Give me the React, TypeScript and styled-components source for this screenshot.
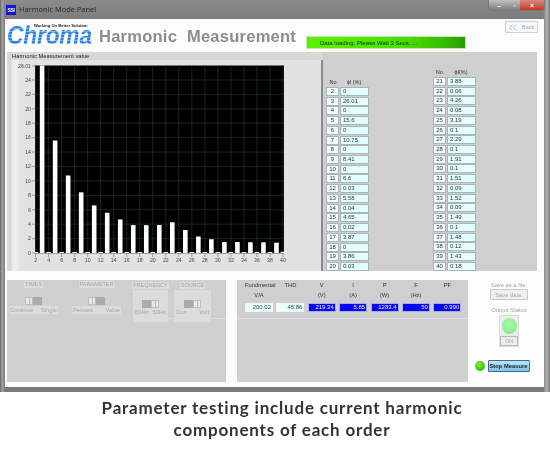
import React from "react";
import styled, { createGlobalStyle } from "styled-components";

const Global = createGlobalStyle`
  html, body { margin: 0; padding: 0; background: #fff; }
  * { box-sizing: border-box; }
  body { font-family: "Liberation Sans", Arial, sans-serif; }
`;

const Page = styled.div`
  width: 550px;
  height: 449px;
  overflow: hidden;
  display: flex;
  flex-direction: column;
  background: #fff;
`;

const Frame = styled.div`
  height: 392px;
  flex: none;
  display: flex;
  flex-direction: column;
  padding: 0 6px 5px 5px;
  background:
    linear-gradient(90deg, #5f5f5f 0, #a5a5a5 2px, #7b7b7b 5px, transparent 5px, transparent 544px, #8a8a8a 544px, #b0b0b0 547px, #777 550px),
    linear-gradient(180deg, #8b8b8b 0, #7c7c7c 19px, #7a7a7a 100%);
  filter: blur(0.3px);
`;

const TitleBar = styled.div`
  height: 19px;
  flex: none;
  display: flex;
  align-items: flex-start;
  color: #2a2a2a;
  margin-right: -1px;
`;

const AppIcon = styled.span`
  width: 10px;
  height: 10px;
  margin: 5px 3px 0 1px;
  background: #1414d8;
  color: #fff;
  font-size: 5px;
  font-weight: bold;
  line-height: 10px;
  text-align: center;
  letter-spacing: -0.3px;
`;

const WindowTitle = styled.span`
  font: 7.4px/19px "Noto Sans", sans-serif;
  flex: 1;
`;

const Controls = styled.div`
  display: flex;
  height: 11px;
  border: 1px solid #777;
  border-top: 0;
  border-radius: 0 0 3px 3px;
  overflow: hidden;
`;

const ControlButton = styled.span<{ $w: number; $close?: boolean }>`
  width: ${(p) => p.$w}px;
  display: flex;
  align-items: center;
  justify-content: center;
  color: #fff;
  font-size: 7px;
  font-weight: bold;
  background: ${(p) => (p.$close ? "linear-gradient(180deg,#d88a80,#c03828)" : "linear-gradient(180deg,#c0c0c0,#7d7d7d)")};
`;

const Client = styled.div`
  flex: 1;
  min-height: 0;
  background: #fcfcfc;
  display: flex;
  flex-direction: column;
  padding-left: 2px;
`;

const Header = styled.div`
  height: 33px;
  flex: none;
  display: flex;
`;

const Logo = styled.div`
  position: relative;
  width: 83px;
  height: 33px;
  margin-right: 9px;
`;

const LogoMark = styled.span`
  display: inline-block;
  margin-top: 4px;
  font: italic bold 25px/24px "Liberation Sans", sans-serif;
  letter-spacing: -0.2px;
  transform: scaleX(0.91);
  transform-origin: 0 0;
  background: repeating-linear-gradient(180deg, #2f7fe6 0, #2f7fe6 2px, #6fb4f2 2px, #6fb4f2 3px);
  -webkit-background-clip: text;
  background-clip: text;
  color: transparent;
`;

const Tagline = styled.span`
  position: absolute;
  left: 27px;
  top: 4px;
  font: bold 4.1px/6px "Liberation Sans", sans-serif;
  color: #222;
  white-space: nowrap;
`;

const Title = styled.h1`
  margin: 0;
  width: 207px;
  flex: none;
  font: bold 16.5px/34px "Liberation Sans", sans-serif;
  color: #8d8d8d;
  letter-spacing: 0.25px;
  word-spacing: 5px;
  white-space: nowrap;
`;

const StatusBar = styled.div`
  width: 160px;
  height: 13px;
  margin-top: 17px;
  flex: none;
  padding-left: 13px;
  font-size: 6px;
  line-height: 12px;
  color: #143000;
  border: 1px solid #c4e8b0;
  background: linear-gradient(90deg, #5cf000 0, #48e000 60%, #38c000 85%, #2a9a00 100%);
`;

const BackButton = styled.button`
  width: 33px;
  height: 12px;
  margin: 2px 0 0 39px;
  padding: 0 0 0 3px;
  flex: none;
  display: flex;
  align-items: center;
  gap: 5px;
  background: #f8f8f8;
  border: 1px solid #c4d0da;
  border-radius: 1px;
  font: 5.5px "Liberation Sans", sans-serif;
  color: #a8a8a8;
`;

const Upper = styled.div`
  width: 530px;
  height: 219px;
  flex: none;
  display: flex;
  background: #cfcfcf;
`;

const ChartSection = styled.section`
  width: 316px;
  flex: none;
  padding-left: 4px;
  display: flex;
  flex-direction: column;
  background: #d8d8d8;
`;

const ChartLabel = styled.div`
  height: 8px;
  flex: none;
  font-size: 5.8px;
  line-height: 7px;
  color: #222;
  padding-left: 1px;
  padding-top: 1px;
`;

const ChartCard = styled.div`
  flex: 1;
  border-right: 2px solid #8a8a8a;
  background: linear-gradient(90deg, #e2e2e2 0, #f1f1f1 4px, #e2e2e2 10px);
`;

const ChartSvg = styled.svg`
  display: block;
  width: 310px;
  height: 211px;
`;

const Tables = styled.section`
  flex: 1;
  display: flex;
  padding-left: 3px;
  gap: 64px;
`;

const Column = styled.div<{ $top: number }>`
  padding-top: ${(p) => p.$top}px;
  display: flex;
  flex-direction: column;
`;

const ColumnHead = styled.div`
  height: 10px;
  display: grid;
  grid-template-columns: 14px 28px;
  font-size: 5.5px;
  line-height: 9px;
  color: #333;
  text-align: center;
`;

const Row = styled.div`
  height: 9.72px;
  flex: none;
  display: grid;
  grid-template-columns: 13px 29px;
  column-gap: 1px;
  font-size: 6px;
  line-height: 7.2px;
  color: #333;
`;

const NoCell = styled.span`
  height: 9px;
  background: #f1fdfd;
  border: 1px solid #a9b5b5;
  text-align: center;
`;

const ValueCell = styled.span`
  height: 9px;
  background: #e4ffff;
  border: 1px solid #a9b5b5;
  padding-left: 2px;
`;

const Lower = styled.div`
  flex: 1;
  display: flex;
  padding-top: 9px;
`;

const SwitchPanel = styled.section`
  width: 219px;
  height: 102px;
  flex: none;
  display: flex;
  padding-left: 2px;
  background:
    linear-gradient(#dfdfdf, #dfdfdf) 126px 38px / 93px 1px no-repeat,
    #cfcfcf;
`;

const SwitchGroup = styled.div<{ $w: number; $gap: number }>`
  width: ${(p) => p.$w}px;
  margin-right: ${(p) => p.$gap}px;
  flex: none;
  display: flex;
  flex-direction: column;
  align-items: center;
`;

const FadedLabel = styled.span<{ $top: number }>`
  margin-top: ${(p) => p.$top}px;
  height: 7px;
  padding: 0 1px;
  background: #dcdcdc;
  color: #a6a6a6;
  font-size: 5.5px;
  line-height: 7px;
  white-space: nowrap;
`;

const SwitchBox = styled.div<{ $box?: boolean }>`
  width: 100%;
  height: ${(p) => (p.$box ? "32px" : "auto")};
  margin-top: ${(p) => (p.$box ? "1px" : "9px")};
  padding-top: ${(p) => (p.$box ? "10px" : "0")};
  background: ${(p) => (p.$box ? "#dcdcdc" : "transparent")};
  display: flex;
  flex-direction: column;
  align-items: center;
`;

const Toggle = styled.div<{ $flip?: boolean }>`
  width: 17px;
  height: 8px;
  display: flex;
  flex-direction: ${(p) => (p.$flip ? "row-reverse" : "row")};
  background: #ababab;
`;

const ToggleThumb = styled.span`
  width: 8px;
  height: 8px;
  border: 1px solid #bdbdbd;
  background: linear-gradient(90deg, #e8e8e8 0 3px, #bdbdbd 3px 4px, #e8e8e8 4px);
`;

const Captions = styled.div<{ $fill?: boolean }>`
  width: 100%;
  display: flex;
  justify-content: space-between;
  padding: ${(p) => (p.$fill ? "0 1px" : "0 2px")};
  background: ${(p) => (p.$fill ? "#dcdcdc" : "transparent")};
  color: #a6a6a6;
  font-size: 5.8px;
  line-height: 8px;
  margin-top: ${(p) => (p.$fill ? "1px" : "0")};
`;

const MeasurePanel = styled.section`
  width: 231px;
  height: 102px;
  flex: none;
  margin-left: 11px;
  padding: 1px 5px 0 8px;
  background:
    linear-gradient(#dfdfdf, #dfdfdf) 0 38px / 100% 1px no-repeat,
    #cfcfcf;
`;

const MeasureGrid = styled.div`
  display: grid;
  grid-template-columns: repeat(7, 28px);
  column-gap: 3.4px;
  grid-template-rows: 9px 13px 9px;
  font-size: 5.8px;
  line-height: 9px;
  color: #333;
  text-align: center;
`;

const MeasureHead = styled.span`
  white-space: nowrap;
`;

const MeasureUnit = styled.span`
  line-height: 11px;
`;

const MeasureValue = styled.span<{ $blue?: boolean }>`
  height: 9px;
  text-align: right;
  padding-right: 1px;
  font-size: 6px;
  line-height: 7px;
  background: ${(p) => (p.$blue ? "#0808ee" : "#e8ffff")};
  color: ${(p) => (p.$blue ? "#e8e8ff" : "#444")};
  border: 1px solid ${(p) => (p.$blue ? "#a8b0e8" : "#f4f4f4")};
`;

const SidePanel = styled.section`
  flex: 1;
  height: 102px;
  display: flex;
  flex-direction: column;
  align-items: center;
  font-size: 5.8px;
  color: #a6a6a6;
`;

const SideLabel = styled.span<{ $top: number }>`
  margin-top: ${(p) => p.$top}px;
  line-height: 8px;
  margin-left: 6px;
`;

const SaveButton = styled.button`
  width: 38px;
  height: 11px;
  margin-left: 6px;
  padding: 0;
  background: #efefef;
  border: 1px solid #c8c8c8;
  border-radius: 1px;
  color: #a6a6a6;
  font: 5.8px "Liberation Sans", sans-serif;
`;

const OutputBox = styled.div`
  width: 20px;
  height: 32px;
  margin: 1px 0 0 6px;
  background: #ececec;
  border: 1px solid #dcdcdc;
  display: flex;
  flex-direction: column;
  align-items: center;
  padding-top: 2px;
`;

const OutputLed = styled.span`
  width: 15px;
  height: 16px;
  border-radius: 50%;
  background: radial-gradient(circle at 45% 40%, #a4f8a4, #84e884);
`;

const OnTag = styled.span`
  width: 18px;
  height: 10px;
  margin-top: 2px;
  border: 1px solid #b8b8b8;
  text-align: center;
  font-size: 5.5px;
  line-height: 8px;
  color: #a6a6a6;
`;

const StopRow = styled.div`
  margin: 13px 8px 0 0;
  display: flex;
  align-items: center;
  gap: 3px;
`;

const StopLed = styled.span`
  width: 10px;
  height: 10px;
  border-radius: 50%;
  background: radial-gradient(circle at 40% 35%, #7cf030, #22a800);
`;

const StopButton = styled.button`
  width: 42px;
  height: 12px;
  padding: 0;
  background: linear-gradient(180deg, #bfe4f8, #7fc0e8);
  border: 1px solid #3c6e90;
  border-radius: 1px;
  color: #10202c;
  font: bold 5.8px "Liberation Sans", sans-serif;
`;

const Caption = styled.p`
  margin: 0;
  padding-top: 5px;
  padding-left: 14px;
  text-align: center;
  font: bold 17px/21.5px Lato, sans-serif;
  letter-spacing: 0.8px;
  color: #333;
  white-space: nowrap;
  filter: blur(0.2px);
`;

const col1: [number, string][] = [
  [2, "0"], [3, "26.01"], [4, "0"], [5, "15.6"], [6, "0"], [7, "10.75"], [8, "0"], [9, "8.41"], [10, "0"],
  [11, "6.6"], [12, "0.03"], [13, "5.58"], [14, "0.04"], [15, "4.65"], [16, "0.02"], [17, "3.87"], [18, "0"],
  [19, "3.86"], [20, "0.03"],
];
const col2: [number, string][] = [
  [21, "3.88"], [22, "0.06"], [23, "4.26"], [24, "0.08"], [25, "3.19"], [26, "0.1"], [27, "2.29"], [28, "0.1"],
  [29, "1.91"], [30, "0.1"], [31, "1.51"], [32, "0.09"], [33, "1.52"], [34, "0.09"], [35, "1.49"], [36, "0.1"],
  [37, "1.48"], [38, "0.12"], [39, "1.43"], [40, "0.18"],
];

const X0 = 35.6;
const DX = 6.51;
const Y0 = 253;
const PY = 7.21;
const all = [...col1, ...col2];
const xTicks = Array.from({ length: 20 }, (_, i) => 2 + i * 2);
const yTicks = Array.from({ length: 13 }, (_, i) => i * 2);

function Chart() {
  return (
    <ChartSvg viewBox="11 60 310 211" aria-label="Harmonic chart">
      <rect x="35" y="65.5" width="249" height="187.5" fill="#000" />
      {xTicks.map((n) => {
        const x = X0 + (n - 2) * DX;
        return <line key={n} x1={x} x2={x} y1="65.5" y2="253" stroke="#1f3a1f" strokeWidth="0.7" />;
      })}
      {yTicks.map((v) => {
        const y = Y0 - v * PY;
        return <line key={v} x1="35" x2="284" y1={y} y2={y} stroke="#1f3a1f" strokeWidth="0.7" />;
      })}
      {all.map(([n, s]) => {
        const v = parseFloat(s);
        const x = X0 + (n - 2) * DX;
        const h = Math.max(v * PY, 1);
        return <rect key={n} x={x - 2.3} y={Y0 - h} width="4.6" height={h} fill="#fff" />;
      })}
      <g fontSize="5.2" fill="#444" fontFamily="Liberation Sans, sans-serif">
        {yTicks.map((v) => {
          const y = Y0 - v * PY;
          return (
            <g key={v}>
              <line x1="32" x2="35" y1={y} y2={y} stroke="#555" strokeWidth="0.5" />
              <text x="31" y={y + 1.8} textAnchor="end">{v}</text>
            </g>
          );
        })}
        <line x1="32" x2="35" y1="66" y2="66" stroke="#555" strokeWidth="0.5" />
        <text x="31" y="68" textAnchor="end">26.01</text>
        {xTicks.map((n) => {
          const x = X0 + (n - 2) * DX;
          return (
            <g key={n}>
              <line x1={x} x2={x} y1="253" y2="257" stroke="#555" strokeWidth="0.5" />
              <text x={x} y="262" textAnchor="middle">{n}</text>
            </g>
          );
        })}
      </g>
    </ChartSvg>
  );
}

function Chevrons() {
  return (
    <svg width="8" height="7" viewBox="0 0 8 7" fill="none" stroke="#a8c4d8" strokeWidth="1">
      <path d="M3.6 0.5 L0.8 3.5 L3.6 6.5 M7 0.5 L4.2 3.5 L7 6.5" />
    </svg>
  );
}

function TableColumn({ top, head, rows }: { top: number; head: string[]; rows: [number, string][] }) {
  return (
    <Column $top={top}>
      <ColumnHead>
        <span>{head[0]}</span>
        <span>{head[1]}</span>
      </ColumnHead>
      {rows.map(([n, v]) => (
        <Row key={n}>
          <NoCell>{n}</NoCell>
          <ValueCell>{v}</ValueCell>
        </Row>
      ))}
    </Column>
  );
}

const measures = [
  { head: "Fundmental", unit: "V/A", value: "200.02", blue: false },
  { head: "THD", unit: "", value: "45.86", blue: false },
  { head: "V", unit: "(V)", value: "219.34", blue: true },
  { head: "I", unit: "(A)", value: "5.85", blue: true },
  { head: "P", unit: "(W)", value: "1283.4", blue: true },
  { head: "F", unit: "(Hz)", value: "50", blue: true },
  { head: "PF", unit: "", value: "0.990", blue: true },
];

export default function App() {
  return (
    <Page>
      <Global />
      <Frame>
        <TitleBar>
          <AppIcon>SSI</AppIcon>
          <WindowTitle>Harmonic Mode Panel</WindowTitle>
          <Controls>
            <ControlButton $w={20}>–</ControlButton>
            <ControlButton $w={11}>▫</ControlButton>
            <ControlButton $w={24} $close>×</ControlButton>
          </Controls>
        </TitleBar>
        <Client>
          <Header>
            <Logo>
              <LogoMark>Chroma</LogoMark>
              <Tagline>Working On Better Solution</Tagline>
            </Logo>
            <Title>Harmonic Measurement</Title>
            <StatusBar>Data loading. Please Wait 3 Secs.....</StatusBar>
            <BackButton>
              <Chevrons />
              Back
            </BackButton>
          </Header>
          <Upper>
            <ChartSection>
              <ChartLabel>Harmonic Measurement value</ChartLabel>
              <ChartCard>
                <Chart />
              </ChartCard>
            </ChartSection>
            <Tables>
              <TableColumn top={26} head={["No", "ϕI (%)"]} rows={col1} />
              <TableColumn top={16} head={["No.", "ϕI(%)"]} rows={col2} />
            </Tables>
          </Upper>
          <Lower>
            <SwitchPanel>
              <SwitchGroup $w={49} $gap={14}>
                <FadedLabel $top={1}>TIMES</FadedLabel>
                <SwitchBox>
                  <Toggle>
                    <ToggleThumb />
                  </Toggle>
                  <Captions $fill>
                    <span>Continue</span>
                    <span>Single</span>
                  </Captions>
                </SwitchBox>
              </SwitchGroup>
              <SwitchGroup $w={49} $gap={12}>
                <FadedLabel $top={1}>PARAMETER</FadedLabel>
                <SwitchBox>
                  <Toggle>
                    <ToggleThumb />
                  </Toggle>
                  <Captions $fill>
                    <span>Percent</span>
                    <span>Value</span>
                  </Captions>
                </SwitchBox>
              </SwitchGroup>
              <SwitchGroup $w={35} $gap={6}>
                <FadedLabel $top={2}>FREQUENCY</FadedLabel>
                <SwitchBox $box>
                  <Toggle $flip>
                    <ToggleThumb />
                  </Toggle>
                  <Captions>
                    <span>60Hz</span>
                    <span>50Hz</span>
                  </Captions>
                </SwitchBox>
              </SwitchGroup>
              <SwitchGroup $w={37} $gap={0}>
                <FadedLabel $top={2}>SOURCE</FadedLabel>
                <SwitchBox $box>
                  <Toggle $flip>
                    <ToggleThumb />
                  </Toggle>
                  <Captions>
                    <span>Curr</span>
                    <span>Volt</span>
                  </Captions>
                </SwitchBox>
              </SwitchGroup>
            </SwitchPanel>
            <MeasurePanel>
              <MeasureGrid>
                {measures.map((m) => <MeasureHead key={m.head}>{m.head}</MeasureHead>)}
                {measures.map((m) => <MeasureUnit key={m.head}>{m.unit}</MeasureUnit>)}
                {measures.map((m) => <MeasureValue key={m.head} $blue={m.blue}>{m.value}</MeasureValue>)}
              </MeasureGrid>
            </MeasurePanel>
            <SidePanel>
              <SideLabel $top={1}>Save as a file.</SideLabel>
              <SaveButton>Save data.</SaveButton>
              <SideLabel $top={6}>Output Status</SideLabel>
              <OutputBox>
                <OutputLed />
                <OnTag>ON</OnTag>
              </OutputBox>
              <StopRow>
                <StopLed />
                <StopButton>Stop Measure</StopButton>
              </StopRow>
            </SidePanel>
          </Lower>
        </Client>
      </Frame>
      <Caption>
        Parameter testing include current harmonic
        <br />
        components of each order
      </Caption>
    </Page>
  );
}
